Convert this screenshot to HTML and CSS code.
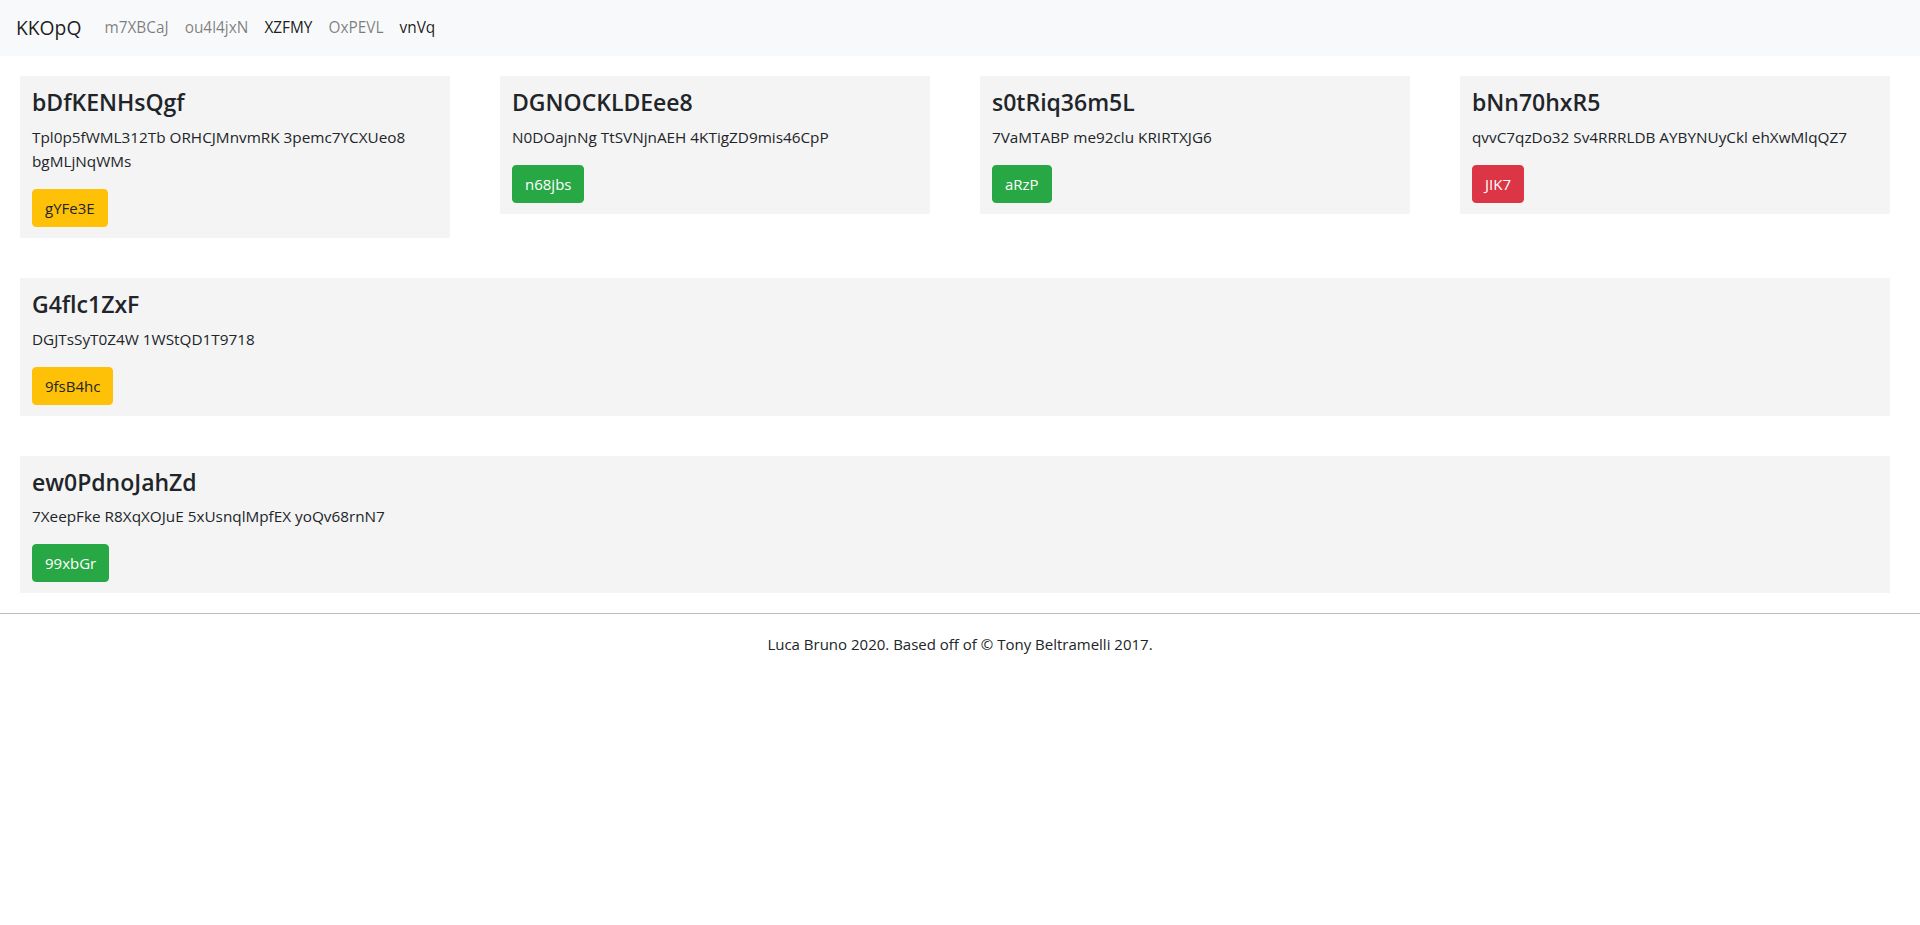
FILE: index.html
```html
<!DOCTYPE html>
<html lang="en">
<head>
<meta charset="utf-8">
<title>KKOpQ</title>
<link rel="stylesheet" href="styles.css">
</head>
<body>
<header class="navbar">
  <a class="brand" href="#">KKOpQ</a>
  <nav class="nav">
    <a class="nav-link" href="#">m7XBCaJ</a>
    <a class="nav-link" href="#">ou4l4jxN</a>
    <a class="nav-link active" href="#">XZFMY</a>
    <a class="nav-link" href="#">OxPEVL</a>
    <a class="nav-link active" href="#">vnVq</a>
  </nav>
</header>
<main class="main">
  <section class="row row-4">
    <div class="card">
      <h4 class="card-title">bDfKENHsQgf</h4>
      <p class="card-text">Tpl0p5fWML312Tb ORHCJMnvmRK 3pemc7YCXUeo8 bgMLjNqWMs</p>
      <a class="btn btn-warning" href="#">gYFe3E</a>
    </div>
    <div class="card">
      <h4 class="card-title">DGNOCKLDEee8</h4>
      <p class="card-text">N0DOajnNg TtSVNjnAEH 4KTigZD9mis46CpP</p>
      <a class="btn btn-success" href="#">n68jbs</a>
    </div>
    <div class="card">
      <h4 class="card-title">s0tRiq36m5L</h4>
      <p class="card-text">7VaMTABP me92clu KRIRTXJG6</p>
      <a class="btn btn-success" href="#">aRzP</a>
    </div>
    <div class="card">
      <h4 class="card-title">bNn70hxR5</h4>
      <p class="card-text">qvvC7qzDo32 Sv4RRRLDB AYBYNUyCkl ehXwMlqQZ7</p>
      <a class="btn btn-danger" href="#">JIK7</a>
    </div>
  </section>
  <section class="row">
    <div class="card">
      <h4 class="card-title">G4flc1ZxF</h4>
      <p class="card-text">DGJTsSyT0Z4W 1WStQD1T9718</p>
      <a class="btn btn-warning" href="#">9fsB4hc</a>
    </div>
  </section>
  <section class="row">
    <div class="card">
      <h4 class="card-title">ew0PdnoJahZd</h4>
      <p class="card-text">7XeepFke R8XqXOJuE 5xUsnqlMpfEX yoQv68rnN7</p>
      <a class="btn btn-success" href="#">99xbGr</a>
    </div>
  </section>
</main>
<hr class="rule">
<footer class="footer">
  <p>Luca Bruno 2020. Based off of © Tony Beltramelli 2017.</p>
</footer>
</body>
</html>
```

FILE: styles.css
```css
* { box-sizing: border-box; }

body {
  margin: 0;
  font-family: "Open Sans", "Noto Sans", "Liberation Sans", sans-serif;
  font-size: 16px;
  line-height: 1.5;
  color: #212529;
  background: #fff;
}

a { text-decoration: none; }

.navbar {
  display: flex;
  align-items: center;
  height: 56px;
  padding: 8px 16px;
  background: #f8f9fa;
}

.brand {
  font-size: 19.3px;
  line-height: 30px;
  color: rgba(0, 0, 0, 0.9);
  margin-right: 15px;
}

.nav {
  display: flex;
}

.nav-link {
  padding: 8px;
  font-size: 15.4px;
  color: rgba(0, 0, 0, 0.5);
}

.nav-link.active {
  color: rgba(0, 0, 0, 0.9);
}

.main {
  padding: 20px 30px 0 20px;
  display: flex;
  flex-direction: column;
  gap: 40px;
}

.row {
  display: grid;
  grid-template-columns: 1fr;
  align-items: start;
}

.row-4 {
  grid-template-columns: repeat(4, 1fr);
  column-gap: 50px;
}

.card {
  background: #f4f4f4;
  padding: 12px 12px 11px;
}

.card-title {
  margin: 0 0 8px;
  font-size: 23px;
  font-weight: 600;
  line-height: 28.8px;
  color: #212529;
}

.card-text {
  margin: 0 0 16px;
  font-size: 15.3px;
  line-height: 24px;
}

.btn {
  display: inline-block;
  padding: 6px 12px;
  border: 1px solid transparent;
  border-radius: 4px;
  font-size: 15px;
  line-height: 24px;
}

.btn-warning {
  background: #ffc107;
  border-color: #ffc107;
  color: #212529;
}

.btn-success {
  background: #28a745;
  border-color: #28a745;
  color: #fff;
}

.btn-danger {
  background: #dc3545;
  border-color: #dc3545;
  color: #fff;
}

.rule {
  margin: 20px 0 0;
  border: 0;
  border-top: 1px solid #bcbcbc;
}

.footer {
  text-align: center;
  padding: 20px 0;
}

.footer p {
  margin: 0;
  font-size: 15px;
  line-height: 21px;
}
```
